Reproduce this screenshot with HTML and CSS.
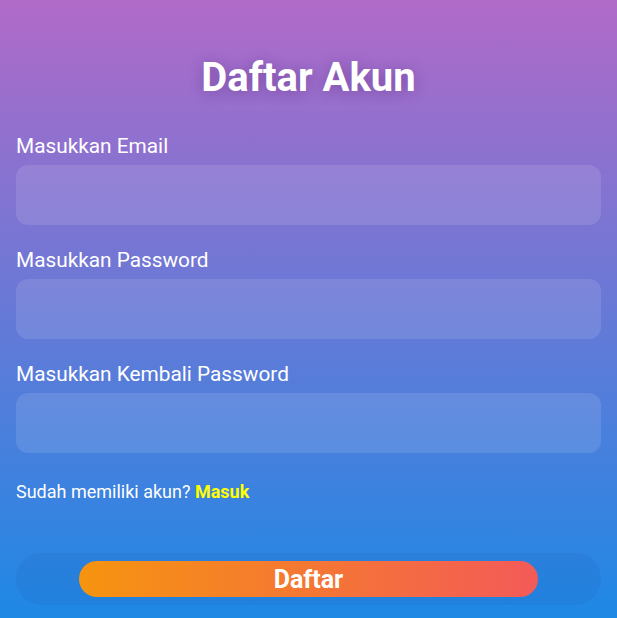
FILE: index.html
```html
<!DOCTYPE html>
<html lang="id">
<head>
<meta charset="utf-8">
<title>Daftar Akun</title>
<link rel="stylesheet" href="styles.css">
</head>
<body>
<main class="page">
  <h1 class="title">Daftar Akun</h1>
  <form class="form">
    <div class="field">
      <label class="label" for="email">Masukkan Email</label>
      <input class="input" id="email" type="email">
    </div>
    <div class="field">
      <label class="label" for="pw">Masukkan Password</label>
      <input class="input" id="pw" type="password">
    </div>
    <div class="field">
      <label class="label" for="pw2">Masukkan Kembali Password</label>
      <input class="input" id="pw2" type="password">
    </div>
    <p class="note">Sudah memiliki akun? <a class="link" href="#">Masuk</a></p>
    <div class="actions">
      <button class="btn" type="button">Daftar</button>
    </div>
  </form>
</main>
</body>
</html>
```
FILE: styles.css
```css
html, body {
  margin: 0;
  padding: 0;
  height: 100%;
}
body {
  font-family: Roboto, "Liberation Sans", sans-serif;
  color: #fff;
  background: linear-gradient(180deg, #b16ac8 0%, #1e88e5 100%);
  min-height: 618px;
}
.page {
  padding: 0 16px;
  display: flex;
  flex-direction: column;
}
.title {
  margin: 56px 0 0;
  height: 44px;
  line-height: 44px;
  text-align: center;
  font-size: 40px;
  font-weight: 700;
  text-shadow: 0 2px 14px rgba(80, 40, 120, 0.45);
}
.form {
  display: flex;
  flex-direction: column;
  margin-top: 35px;
}
.field {
  display: flex;
  flex-direction: column;
  margin-bottom: 24px;
}
.label {
  font-size: 20.8px;
  line-height: 22px;
  margin-bottom: 8px;
}
.input {
  height: 60px;
  box-sizing: border-box;
  border: none;
  border-radius: 12px;
  background: rgba(255, 255, 255, 0.11);
  outline: none;
  color: #fff;
  font-size: 16px;
  padding: 0 14px;
}
.note {
  margin: 4px 0 0;
  font-size: 18px;
  line-height: 22px;
}
.link {
  color: #ffff00;
  font-weight: 700;
  text-decoration: none;
}
.actions {
  margin-top: 50px;
  padding: 8px 63px;
  border-radius: 26px;
  background: rgba(20, 60, 140, 0.08);
  display: flex;
}
.btn {
  flex: 1;
  height: 36px;
  border: none;
  border-radius: 18px;
  background: linear-gradient(90deg, #f6940f 0%, #f35a58 100%);
  color: #fff;
  font-family: Roboto, "Liberation Sans", sans-serif;
  font-size: 25px;
  font-weight: 700;
  padding: 0;
}
```
